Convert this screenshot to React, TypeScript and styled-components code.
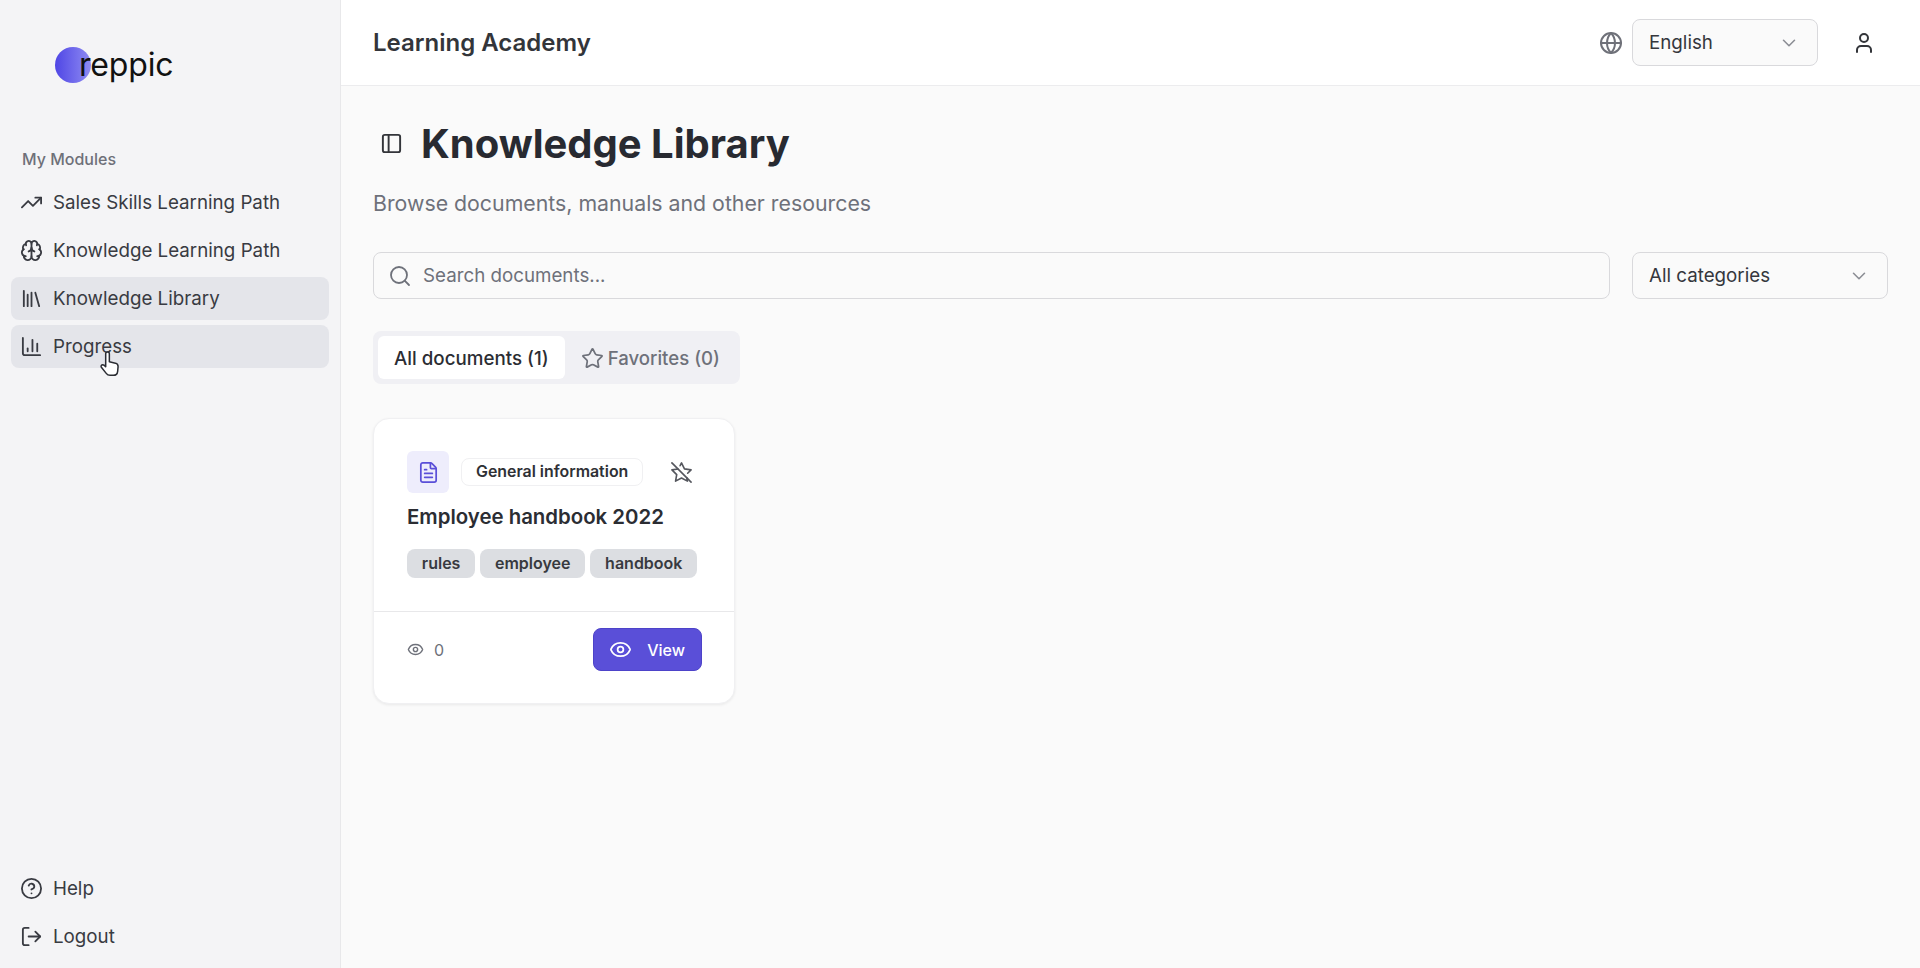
import styled, { createGlobalStyle } from 'styled-components'
import {
  BarChart3,
  Brain,
  ChevronDown,
  CircleHelp,
  Eye,
  FileText,
  Globe,
  Library,
  LogOut,
  PanelLeft,
  Search,
  Star,
  StarOff,
  TrendingUp,
  User,
} from 'lucide-react'

const GlobalStyle = createGlobalStyle`
  * { box-sizing: border-box; }
  html, body { margin: 0; height: 100%; }
  body {
    font-family: Inter, "Liberation Sans", sans-serif;
    font-optical-sizing: none;
    color: #2b2d33;
    background: #fafafa;
  }
`

const Page = styled.div`
  display: flex;
  height: 968px;
  overflow: hidden;
`

const Sidebar = styled.aside`
  display: flex;
  flex: 0 0 341px;
  flex-direction: column;
  background: #f4f4f6;
  border-right: 1px solid #e8e8ea;
`

const Brand = styled.div`
  display: flex;
  align-items: center;
  height: 130px;
  padding-left: 55px;
`

const LogoDot = styled.span`
  width: 36px;
  height: 36px;
  border-radius: 50%;
  background: linear-gradient(90deg, #4f46e5, #8f8bf2);
`

const LogoText = styled.span`
  margin-left: -12px;
  font-size: 32px;
  letter-spacing: -0.15px;
  color: #111;
  position: relative;
  top: -1px;
`

const SectionLabel = styled.div`
  padding: 19px 0 0 22px;
  height: 51px;
  font-size: 16px;
  font-weight: 500;
  color: #6e7079;
`

const NavList = styled.nav`
  display: flex;
  flex-direction: column;
  gap: 5px;
  padding: 0 11px;
`

const NavItem = styled.div<{ $active?: boolean }>`
  position: relative;
  display: flex;
  align-items: center;
  gap: 10px;
  height: 43px;
  padding-left: 9px;
  border-radius: 8px;
  font-size: 18.75px;
  color: #393b42;
  background: ${(p) => (p.$active ? '#e4e5ea' : 'transparent')};

  svg.icon {
    flex: none;
    width: 23px;
    height: 23px;
    stroke-width: 1.9;
  }
`

const Cursor = styled.svg`
  position: absolute;
  left: 88px;
  top: 25px;
  width: 22px;
  height: 28px;
`

const SidebarFooter = styled(NavList)`
  margin-top: auto;
  padding-bottom: 10px;
`

const Content = styled.div`
  display: flex;
  flex: 1;
  flex-direction: column;
  min-width: 0;
`

const Header = styled.header`
  display: flex;
  align-items: center;
  flex: 0 0 86px;
  padding: 0 32px;
  background: #fff;
  border-bottom: 1px solid #ececee;
`

const HeaderTitle = styled.h2`
  flex: 1;
  margin: 0;
  font-size: 24px;
  font-weight: 600;
  color: #33353a;
`

const GlobeIcon = styled(Globe)`
  width: 24px;
  height: 24px;
  margin-right: 9px;
  color: #6f7179;
`

const Select = styled.div<{ $width: number }>`
  display: flex;
  align-items: center;
  justify-content: space-between;
  flex: none;
  width: ${(p) => p.$width}px;
  height: 47px;
  padding: 0 17px 0 16px;
  border: 1px solid #d9d9dc;
  border-radius: 8px;
  background: #fafafa;
  font-size: 18.75px;
  color: #35373d;

  svg {
    width: 22px;
    height: 22px;
    stroke-width: 1.7;
    color: #8b8d94;
  }
`

const UserIcon = styled(User)`
  width: 24px;
  height: 24px;
  margin-left: 34px;
  margin-right: 12px;
  color: #33353a;
`

const Main = styled.main`
  display: flex;
  flex-direction: column;
  padding: 27px 32px 0;
`

const TitleRow = styled.div`
  display: flex;
  align-items: center;
  gap: 18px;
  height: 60px;
  padding-left: 7px;
`

const PanelIcon = styled(PanelLeft)`
  flex: none;
  width: 23px;
  height: 23px;
  color: #33353a;
`

const Title = styled.h1`
  margin: 0;
  font-size: 40px;
  font-weight: 700;
  color: #282a31;
`

const Subtitle = styled.p`
  margin: 15px 0 0;
  line-height: 30px;
  font-size: 21.3px;
  color: #6e717a;
`

const Filters = styled.div`
  display: flex;
  gap: 22px;
  margin-top: 34px;
`

const SearchBox = styled.div`
  display: flex;
  flex: 1;
  align-items: center;
  gap: 11px;
  height: 47px;
  padding-left: 14px;
  border: 1px solid #d9d9dc;
  border-radius: 8px;
  font-size: 18.75px;
  color: #6e717a;

  svg {
    width: 24px;
    height: 24px;
    stroke-width: 1.8;
  }
`

const Tabs = styled.div`
  display: flex;
  align-self: flex-start;
  margin-top: 32px;
  padding: 5px;
  border-radius: 8px;
  background: #f0f0f4;
`

const Tab = styled.div<{ $active?: boolean }>`
  display: flex;
  align-items: center;
  gap: 4px;
  height: 43px;
  padding: 1px ${(p) => (p.$active ? 16 : 15)}px 0 16px;
  border-radius: 6px;
  font-size: ${(p) => (p.$active ? 18.75 : 18.6)}px;
  font-weight: 500;
  color: ${(p) => (p.$active ? '#2b2d33' : '#6e717a')};
  background: ${(p) => (p.$active ? '#fff' : 'transparent')};

  svg {
    width: 23px;
    height: 23px;
    stroke-width: 1.8;
  }
`

const Card = styled.article`
  width: 362px;
  margin-top: 34px;
  background: #fff;
  border: 1px solid #f0f0f2;
  border-radius: 16px;
  box-shadow: 0 1px 3px rgba(0, 0, 0, 0.07);
`

const CardBody = styled.div`
  display: flex;
  flex-direction: column;
  height: 193px;
  padding: 32px 33px 0;
  border-bottom: 1px solid #e8e8ea;
`

const CardTop = styled.div`
  display: flex;
  align-items: center;
`

const DocIcon = styled.div`
  display: flex;
  align-items: center;
  justify-content: center;
  width: 42px;
  height: 42px;
  border-radius: 6px;
  background: #eeedfc;
  color: #5a4fd8;

  svg {
    width: 23px;
    height: 23px;
    stroke-width: 1.8;
  }
`

const CategoryBadge = styled.span`
  margin-left: 12px;
  padding: 0 14px;
  height: 28px;
  line-height: 26px;
  border: 1px solid #f0f0f2;
  border-radius: 8px;
  font-size: 15.9px;
  font-weight: 600;
  color: #2f3136;
`

const PinIcon = styled(StarOff)`
  width: 23px;
  height: 23px;
  margin-left: 27px;
  stroke-width: 1.7;
  color: #55575e;
`

const CardTitle = styled.h3`
  margin: 6px 0 0;
  line-height: 36px;
  font-size: 20.4px;
  font-weight: 600;
  color: #2b2d33;
`

const TagRow = styled.div`
  display: flex;
  gap: 5px;
  margin-top: 14px;
`

const Tag = styled.span`
  height: 29px;
  line-height: 29px;
  padding: 0 14.8px;
  border-radius: 8px;
  background: #dcdee2;
  font-size: 16px;
  font-weight: 600;
  color: #383a40;
`

const CardFooter = styled.div`
  display: flex;
  align-items: center;
  justify-content: space-between;
  height: 91px;
  padding: 16px 32px 32px 33px;
`

const Views = styled.div`
  display: flex;
  align-items: center;
  gap: 10px;
  font-size: 16px;
  color: #6e717a;

  svg {
    width: 17px;
    height: 17px;
  }
`

const ViewButton = styled.button`
  display: flex;
  align-items: center;
  gap: 15px;
  height: 43px;
  padding: 0 16px 0 15px;
  border: 1px solid #4d43c9;
  border-radius: 8px;
  background: #5a4fd8;
  font-family: inherit;
  font-optical-sizing: none;
  font-size: 16px;
  font-weight: 500;
  color: #fff;

  svg {
    width: 23px;
    height: 23px;
    stroke-width: 1.8;
  }
`

export default function App() {
  return (
    <>
      <GlobalStyle />
      <Page>
        <Sidebar>
          <Brand>
            <LogoDot />
            <LogoText>reppic</LogoText>
          </Brand>
          <SectionLabel>My Modules</SectionLabel>
          <NavList>
            <NavItem>
              <TrendingUp className="icon" />
              Sales Skills Learning Path
            </NavItem>
            <NavItem>
              <Brain className="icon" />
              Knowledge Learning Path
            </NavItem>
            <NavItem $active>
              <Library className="icon" />
              Knowledge Library
            </NavItem>
            <NavItem $active>
              <BarChart3 className="icon" />
              Progress
              <Cursor viewBox="0 0 20 26">
                <path
                  d="M6 14V3.5a1.7 1.7 0 0 1 3.4 0V11l5.6 1.2c1.6.4 2.6 1.6 2.5 3.2l-.4 4.4c-.2 2-1.8 3.7-4 3.7H10c-1.5 0-2.6-.6-3.5-1.8L2 16c-.7-1 0-2.4 1.3-2.4.8 0 1.5.4 2.7 1.9z"
                  fill="#fff"
                  stroke="#2b2d33"
                  strokeWidth="1.4"
                  strokeLinejoin="round"
                />
              </Cursor>
            </NavItem>
          </NavList>
          <SidebarFooter>
            <NavItem>
              <CircleHelp className="icon" />
              Help
            </NavItem>
            <NavItem>
              <LogOut className="icon" />
              Logout
            </NavItem>
          </SidebarFooter>
        </Sidebar>
        <Content>
          <Header>
            <HeaderTitle>Learning Academy</HeaderTitle>
            <GlobeIcon />
            <Select $width={186}>
              English
              <ChevronDown />
            </Select>
            <UserIcon />
          </Header>
          <Main>
            <TitleRow>
              <PanelIcon />
              <Title>Knowledge Library</Title>
            </TitleRow>
            <Subtitle>Browse documents, manuals and other resources</Subtitle>
            <Filters>
              <SearchBox>
                <Search />
                Search documents...
              </SearchBox>
              <Select $width={256}>
                All categories
                <ChevronDown />
              </Select>
            </Filters>
            <Tabs>
              <Tab $active>All documents (1)</Tab>
              <Tab>
                <Star />
                Favorites (0)
              </Tab>
            </Tabs>
            <Card>
              <CardBody>
                <CardTop>
                  <DocIcon>
                    <FileText />
                  </DocIcon>
                  <CategoryBadge>General information</CategoryBadge>
                  <PinIcon />
                </CardTop>
                <CardTitle>Employee handbook 2022</CardTitle>
                <TagRow>
                  <Tag>rules</Tag>
                  <Tag>employee</Tag>
                  <Tag>handbook</Tag>
                </TagRow>
              </CardBody>
              <CardFooter>
                <Views>
                  <Eye />0
                </Views>
                <ViewButton>
                  <Eye />
                  View
                </ViewButton>
              </CardFooter>
            </Card>
          </Main>
        </Content>
      </Page>
    </>
  )
}
